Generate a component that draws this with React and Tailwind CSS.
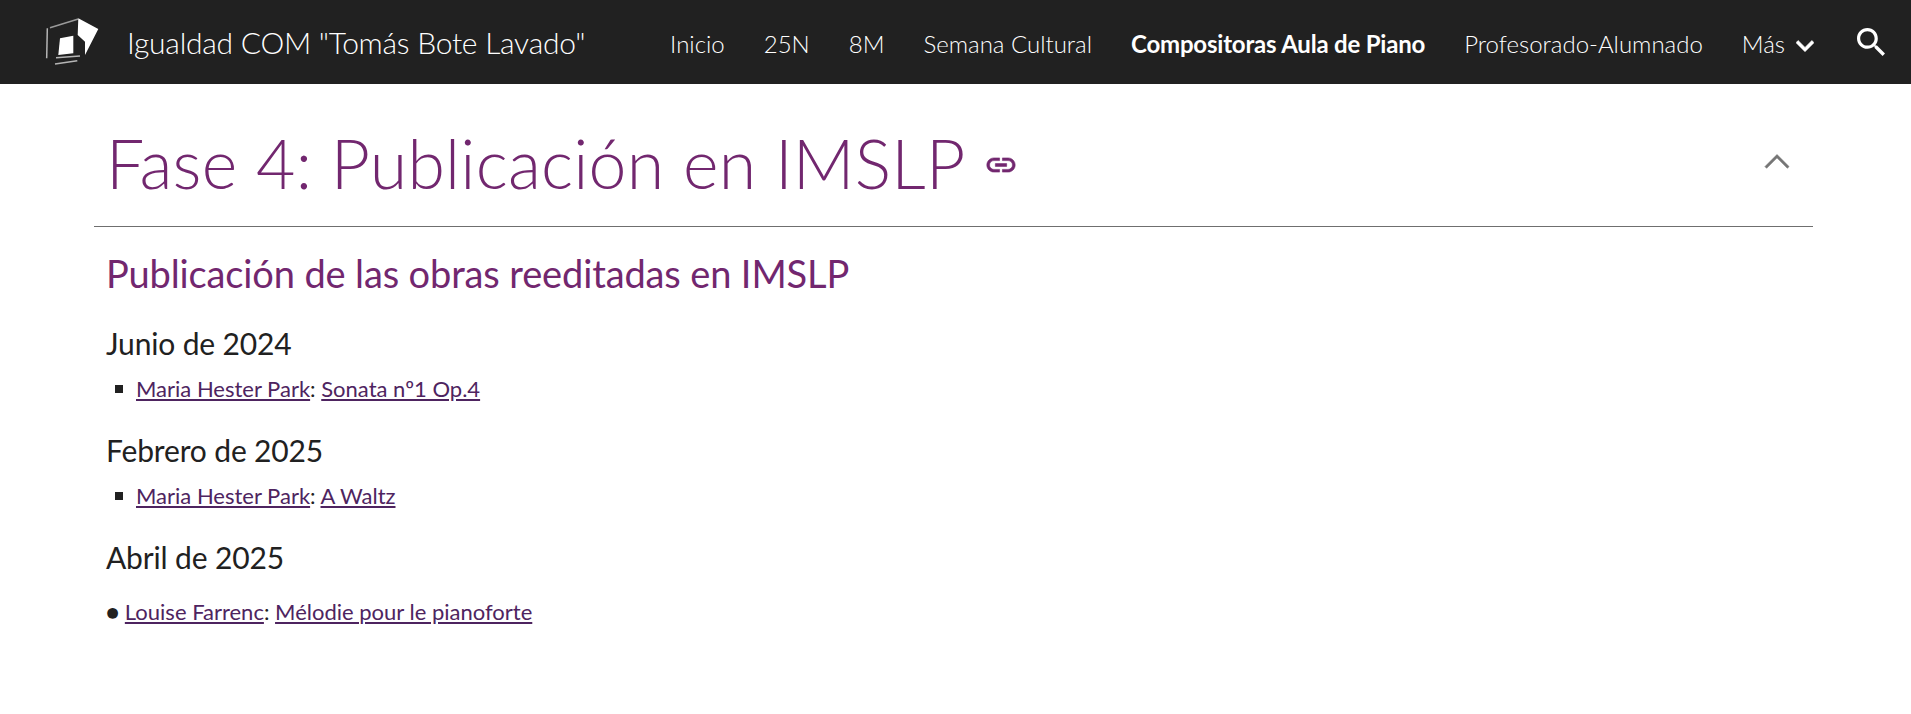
const navItems = ["Inicio", "25N", "8M", "Semana Cultural", "Compositoras Aula de Piano", "Profesorado-Alumnado"];

const Logo = () => (
  <svg width="56" height="52" viewBox="44 15 56 52" aria-hidden="true">
    <path d="M47.300 28.300 L46.700 58.300" stroke="#b5b5b5" strokeWidth="1.500" fill="none" />
    <path d="M50 27.700 L78.300 19" stroke="#9a9a9a" strokeWidth="1.500" fill="none" />
    <path d="M78.300 18.300 L98.300 29 L85 55 L85 41.700 L77.700 35 Z" fill="#fff" />
    <path d="M60 38.300 L73.300 35.700 L73.300 53.300 L58.300 55 Z" fill="#fff" />
    <path d="M56 57.700 L80 56 M55 64 L77.300 60.700" stroke="#b5b5b5" strokeWidth="1.500" fill="none" />
  </svg>
);

const Entry = ({ author, work }) => (
  <li className="flex items-center text-[22px] leading-[32px]">
    <span className="w-[8px] h-[8px] bg-[#212121] ml-[9px] mr-[13px]"></span>
    <span>
      <a href="#" className="underline text-[#4e2460]">{author}</a>: <a href="#" className="underline text-[#4e2460]">{work}</a>
    </span>
  </li>
);

export default function App() {
  return (
    <div className="min-h-[714px] bg-white text-[#212121] font-['Lato','Liberation_Sans',sans-serif]">
      <header className="h-[84px] bg-[#212121] flex items-center text-white">
        <div className="ml-[44px] w-[83px] mb-[2px]">
          <Logo />
        </div>
        <span className="text-[30px] font-light tracking-[-0.25px] whitespace-nowrap">Igualdad COM "Tomás Bote Lavado"</span>
        <nav className="ml-[85px] flex items-center gap-[39px] text-[24px] font-light mt-[3px]">
          {navItems.map(item => (
            <a key={item} href="#" className={item.startsWith("Compositoras") ? "font-bold tracking-[-0.2px] whitespace-nowrap" : "whitespace-nowrap"}>
              {item}
            </a>
          ))}
          <span className="flex items-center gap-[11px] whitespace-nowrap">
            Más
            <svg width="18" height="12" viewBox="6 8.500 12 7.500" className="mt-[5px]" fill="#fff" stroke="#fff" strokeWidth="0.4" aria-hidden="true">
              <path d="M16.590 8.590L12 13.170 7.410 8.590 6 10l6 6 6-6z" />
            </svg>
          </span>
        </nav>
        <svg width="28" height="28" viewBox="3 3 17.500 17.500" className="ml-auto mr-[26px] mb-[1px]" fill="#fff" aria-hidden="true">
          <path d="M15.500 14h-.79l-.28-.27C15.410 12.590 16 11.110 16 9.500 16 5.910 13.090 3 9.500 3S3 5.910 3 9.500 5.910 16 9.500 16c1.610 0 3.090-.59 4.230-1.570l.27.28v.79l5 4.990L20.490 19l-4.990-5zm-6 0C7.010 14 5 11.990 5 9.500S7.010 5 9.500 5 14 7.010 14 9.500 11.990 14 9.500 14z" />
        </svg>
      </header>

      <main className="px-[94px]">
        <div className="h-[143px] border-b border-[#6f6f6f] flex items-center pt-[15px] pl-[12px] pr-[12px] w-[1719px]">
          <h1 className="text-[68px] font-light tracking-[0.2px] text-[#72276f] whitespace-nowrap">Fase 4: Publicación en IMSLP</h1>
          <svg width="34" height="34" viewBox="0 0 24 24" fill="#72276f" stroke="#72276f" strokeWidth="0.4" className="ml-[19px] mt-[4px]" aria-hidden="true">
            <path d="M3.900 12c0-1.710 1.390-3.100 3.100-3.100h4V7H7c-2.760 0-5 2.240-5 5s2.240 5 5 5h4v-1.900H7c-1.710 0-3.100-1.390-3.100-3.100zM8 13h8v-2H8v2zm9-6h-4v1.900h4c1.710 0 3.100 1.390 3.100 3.100s-1.390 3.100-3.100 3.100h-4V17h4c2.760 0 5-2.240 5-5s-2.240-5-5-5z" />
          </svg>
          <svg width="48" height="48" viewBox="0 0 24 24" fill="#757575" stroke="#757575" strokeWidth="0.35" className="ml-auto mb-[4px]" aria-hidden="true">
            <path d="M12 8.800l-6 6 .8.800L12 10.400l5.200 5.200.8-.8z" />
          </svg>
        </div>

        <div className="pl-[12px]">
          <h2 className="mt-[23px] text-[38px] tracking-[-0.13px] leading-[46px] text-[#72276f]">Publicación de las obras reeditadas en IMSLP</h2>

          <h3 className="mt-[27px] text-[30px] tracking-[-0.15px] leading-[40px]">Junio de 2024</h3>
          <ul className="mt-[10px]">
            <Entry author="Maria Hester Park" work="Sonata nº1 Op.4" />
          </ul>

          <h3 className="mt-[25px] text-[30px] tracking-[-0.15px] leading-[40px]">Febrero de 2025</h3>
          <ul className="mt-[10px]">
            <Entry author="Maria Hester Park" work="A Waltz" />
          </ul>

          <h3 className="mt-[25px] text-[30px] tracking-[-0.15px] leading-[40px]">Abril de 2025</h3>
          <p className="mt-[19px] text-[22px] leading-[32px]">
            ● <a href="#" className="underline text-[#4e2460]">Louise Farrenc</a>: <a href="#" className="underline text-[#4e2460]">Mélodie pour le pianoforte</a>
          </p>
        </div>
      </main>
    </div>
  );
}
